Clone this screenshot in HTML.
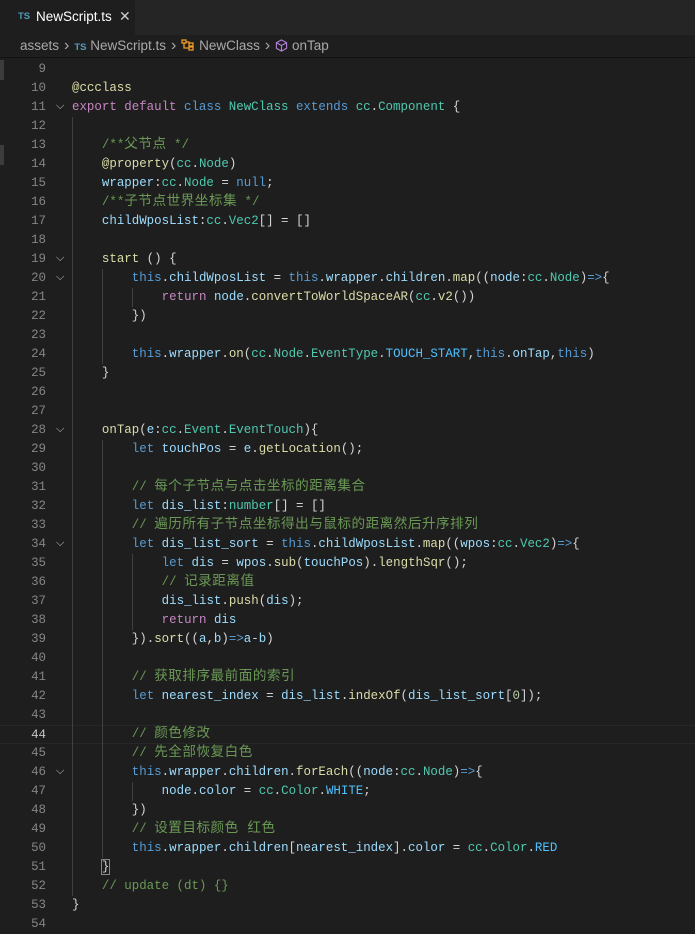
<!DOCTYPE html>
<html><head><meta charset="utf-8"><style>
*{margin:0;padding:0;box-sizing:border-box}
body{width:695px;height:924px;background:#1e1e1e;overflow:hidden;font-family:"Liberation Sans","Noto Sans CJK SC",sans-serif;position:relative}
.tabs{position:absolute;left:0;top:0;width:695px;height:35px;background:#252526}
.tab{position:absolute;left:0;top:0;width:135px;height:35px;background:#1e1e1e;color:#fff;font-size:13.5px}
.tab .ts{position:absolute;left:18px;top:11px;font-size:9.5px;font-weight:bold;color:#519aba}
.tab .nm{position:absolute;left:36px;top:9px}
.tab .x{position:absolute;left:119px;top:8px;font-size:14px;color:#ccc}
.bc{position:absolute;left:0;top:35px;height:22px;width:695px;color:#a9a9a9;font-size:13.5px;line-height:22px;padding-left:20px;white-space:nowrap}
.bc .ts{font-size:9.5px;font-weight:bold;color:#519aba}
.bc .sep{color:#a9a9a9;margin:0 5px;font-size:16px}
.ed{position:absolute;left:0;top:60px;width:695px}
.ln{position:relative;height:19px;line-height:19px;font-family:"Liberation Mono","Noto Sans CJK SC",monospace;font-size:12.45px;color:#d4d4d4;white-space:pre}
.num{position:absolute;left:0;width:46px;text-align:right;color:#858585}
.fold{position:absolute;left:56px;top:0;color:#c5c5c5;font-size:11px}
.code{position:absolute;left:72px;top:0}
.g{display:inline-block;width:29.9px;height:19px;vertical-align:top;border-left:1px solid #404040}
.cur{border-top:1px solid #282828;border-bottom:1px solid #282828;}
.k{color:#569cd6}.p{color:#c586c0}.t{color:#4ec9b0}.f{color:#dcdcaa}.v{color:#9cdcfe}.c{color:#6a9955}.n{color:#b5cea8}.co{color:#4fc1ff}
.z{font-size:13.6px;letter-spacing:.5px}
</style></head><body>
<div class="tabs"><div class="tab"><span class="ts">TS</span><span class="nm">NewScript.ts</span><span class="x">✕</span></div></div>
<div class="bc">assets<span class="sep">›</span><span class="ts">TS</span> NewScript.ts<span class="sep">›</span><svg width="14" height="12" viewBox="0 0 14 12" style="vertical-align:-1px"><g fill="none" stroke="#ee9d28" stroke-width="1.3"><rect x="1" y="1" width="4" height="3"/><rect x="8" y="4" width="4" height="3"/><rect x="8" y="8" width="4" height="3"/><path d="M3 4v5h5M5 3h3v2"/></g></svg> NewClass<span class="sep">›</span><svg width="13" height="13" viewBox="0 0 14 14" style="vertical-align:-2px"><g fill="none" stroke="#b180d7" stroke-width="1.2"><path d="M7 1l5.5 3v6L7 13 1.5 10V4z"/><path d="M1.5 4L7 7l5.5-3M7 7v6"/></g></svg> onTap</div>
<div style="position:absolute;left:0;top:57px;width:695px;height:1px;background:#000;opacity:.4"></div>
<div style="position:absolute;left:0;top:60px;width:4px;height:20px;background:#3c3c3c"></div>
<div style="position:absolute;left:0;top:145px;width:4px;height:20px;background:#3c3c3c"></div>
<div class="ed">
<div class="ln"><span class="num">9</span><span class="code"></span></div>
<div class="ln"><span class="num">10</span><span class="code"><span class="f">@ccclass</span></span></div>
<div class="ln"><span class="num">11</span><span class="fold">⌵</span><span class="code"><span class="p">export</span> <span class="p">default</span> <span class="k">class</span> <span class="t">NewClass</span> <span class="k">extends</span> <span class="t">cc</span>.<span class="t">Component</span> {</span></div>
<div class="ln"><span class="num">12</span><span class="code"><span class="g"></span></span></div>
<div class="ln"><span class="num">13</span><span class="code"><span class="g"></span><span class="c">/**<span class="z">父节点</span> */</span></span></div>
<div class="ln"><span class="num">14</span><span class="code"><span class="g"></span><span class="f">@property</span>(<span class="t">cc</span>.<span class="t">Node</span>)</span></div>
<div class="ln"><span class="num">15</span><span class="code"><span class="g"></span><span class="v">wrapper</span>:<span class="t">cc</span>.<span class="t">Node</span> = <span class="k">null</span>;</span></div>
<div class="ln"><span class="num">16</span><span class="code"><span class="g"></span><span class="c">/**<span class="z">子节点世界坐标集</span> */</span></span></div>
<div class="ln"><span class="num">17</span><span class="code"><span class="g"></span><span class="v">childWposList</span>:<span class="t">cc</span>.<span class="t">Vec2</span>[] = []</span></div>
<div class="ln"><span class="num">18</span><span class="code"><span class="g"></span></span></div>
<div class="ln"><span class="num">19</span><span class="fold">⌵</span><span class="code"><span class="g"></span><span class="f">start</span> () {</span></div>
<div class="ln"><span class="num">20</span><span class="fold">⌵</span><span class="code"><span class="g"></span><span class="g"></span><span class="k">this</span>.<span class="v">childWposList</span> = <span class="k">this</span>.<span class="v">wrapper</span>.<span class="v">children</span>.<span class="f">map</span>((<span class="v">node</span>:<span class="t">cc</span>.<span class="t">Node</span>)<span class="k">=&gt;</span>{</span></div>
<div class="ln"><span class="num">21</span><span class="code"><span class="g"></span><span class="g"></span><span class="g"></span><span class="p">return</span> <span class="v">node</span>.<span class="f">convertToWorldSpaceAR</span>(<span class="t">cc</span>.<span class="f">v2</span>())</span></div>
<div class="ln"><span class="num">22</span><span class="code"><span class="g"></span><span class="g"></span>})</span></div>
<div class="ln"><span class="num">23</span><span class="code"><span class="g"></span><span class="g"></span></span></div>
<div class="ln"><span class="num">24</span><span class="code"><span class="g"></span><span class="g"></span><span class="k">this</span>.<span class="v">wrapper</span>.<span class="f">on</span>(<span class="t">cc</span>.<span class="t">Node</span>.<span class="t">EventType</span>.<span class="co">TOUCH_START</span>,<span class="k">this</span>.<span class="v">onTap</span>,<span class="k">this</span>)</span></div>
<div class="ln"><span class="num">25</span><span class="code"><span class="g"></span>}</span></div>
<div class="ln"><span class="num">26</span><span class="code"><span class="g"></span></span></div>
<div class="ln"><span class="num">27</span><span class="code"><span class="g"></span></span></div>
<div class="ln"><span class="num">28</span><span class="fold">⌵</span><span class="code"><span class="g"></span><span class="f">onTap</span>(<span class="v">e</span>:<span class="t">cc</span>.<span class="t">Event</span>.<span class="t">EventTouch</span>){</span></div>
<div class="ln"><span class="num">29</span><span class="code"><span class="g"></span><span class="g"></span><span class="k">let</span> <span class="v">touchPos</span> = <span class="v">e</span>.<span class="f">getLocation</span>();</span></div>
<div class="ln"><span class="num">30</span><span class="code"><span class="g"></span><span class="g"></span></span></div>
<div class="ln"><span class="num">31</span><span class="code"><span class="g"></span><span class="g"></span><span class="c">// <span class="z">每个子节点与点击坐标的距离集合</span></span></span></div>
<div class="ln"><span class="num">32</span><span class="code"><span class="g"></span><span class="g"></span><span class="k">let</span> <span class="v">dis_list</span>:<span class="t">number</span>[] = []</span></div>
<div class="ln"><span class="num">33</span><span class="code"><span class="g"></span><span class="g"></span><span class="c">// <span class="z">遍历所有子节点坐标得出与鼠标的距离然后升序排列</span></span></span></div>
<div class="ln"><span class="num">34</span><span class="fold">⌵</span><span class="code"><span class="g"></span><span class="g"></span><span class="k">let</span> <span class="v">dis_list_sort</span> = <span class="k">this</span>.<span class="v">childWposList</span>.<span class="f">map</span>((<span class="v">wpos</span>:<span class="t">cc</span>.<span class="t">Vec2</span>)<span class="k">=&gt;</span>{</span></div>
<div class="ln"><span class="num">35</span><span class="code"><span class="g"></span><span class="g"></span><span class="g"></span><span class="k">let</span> <span class="v">dis</span> = <span class="v">wpos</span>.<span class="f">sub</span>(<span class="v">touchPos</span>).<span class="f">lengthSqr</span>();</span></div>
<div class="ln"><span class="num">36</span><span class="code"><span class="g"></span><span class="g"></span><span class="g"></span><span class="c">// <span class="z">记录距离值</span></span></span></div>
<div class="ln"><span class="num">37</span><span class="code"><span class="g"></span><span class="g"></span><span class="g"></span><span class="v">dis_list</span>.<span class="f">push</span>(<span class="v">dis</span>);</span></div>
<div class="ln"><span class="num">38</span><span class="code"><span class="g"></span><span class="g"></span><span class="g"></span><span class="p">return</span> <span class="v">dis</span></span></div>
<div class="ln"><span class="num">39</span><span class="code"><span class="g"></span><span class="g"></span>}).<span class="f">sort</span>((<span class="v">a</span>,<span class="v">b</span>)<span class="k">=&gt;</span><span class="v">a</span>-<span class="v">b</span>)</span></div>
<div class="ln"><span class="num">40</span><span class="code"><span class="g"></span><span class="g"></span></span></div>
<div class="ln"><span class="num">41</span><span class="code"><span class="g"></span><span class="g"></span><span class="c">// <span class="z">获取排序最前面的索引</span></span></span></div>
<div class="ln"><span class="num">42</span><span class="code"><span class="g"></span><span class="g"></span><span class="k">let</span> <span class="v">nearest_index</span> = <span class="v">dis_list</span>.<span class="f">indexOf</span>(<span class="v">dis_list_sort</span>[<span class="n">0</span>]);</span></div>
<div class="ln"><span class="num">43</span><span class="code"><span class="g"></span><span class="g"></span></span></div>
<div class="ln cur"><span class="num" style="color:#c6c6c6">44</span><span class="code" style="top:-1px"><span class="g"></span><span class="g"></span><span class="c">// <span class="z">颜色修改</span></span></span></div>
<div class="ln"><span class="num">45</span><span class="code"><span class="g"></span><span class="g"></span><span class="c">// <span class="z">先全部恢复白色</span></span></span></div>
<div class="ln"><span class="num">46</span><span class="fold">⌵</span><span class="code"><span class="g"></span><span class="g"></span><span class="k">this</span>.<span class="v">wrapper</span>.<span class="v">children</span>.<span class="f">forEach</span>((<span class="v">node</span>:<span class="t">cc</span>.<span class="t">Node</span>)<span class="k">=&gt;</span>{</span></div>
<div class="ln"><span class="num">47</span><span class="code"><span class="g"></span><span class="g"></span><span class="g"></span><span class="v">node</span>.<span class="v">color</span> = <span class="t">cc</span>.<span class="t">Color</span>.<span class="co">WHITE</span>;</span></div>
<div class="ln"><span class="num">48</span><span class="code"><span class="g"></span><span class="g"></span>})</span></div>
<div class="ln"><span class="num">49</span><span class="code"><span class="g"></span><span class="g"></span><span class="c">// <span class="z">设置目标颜色 红色</span></span></span></div>
<div class="ln"><span class="num">50</span><span class="code"><span class="g"></span><span class="g"></span><span class="k">this</span>.<span class="v">wrapper</span>.<span class="v">children</span>[<span class="v">nearest_index</span>].<span class="v">color</span> = <span class="t">cc</span>.<span class="t">Color</span>.<span class="co">RED</span></span></div>
<div class="ln"><span class="num">51</span><span class="code"><span class="g"></span><span style="outline:1px solid #888">}</span></span></div>
<div class="ln"><span class="num">52</span><span class="code"><span class="g"></span><span class="c">// update (dt) {}</span></span></div>
<div class="ln"><span class="num">53</span><span class="code">}</span></div>
<div class="ln"><span class="num">54</span><span class="code"></span></div>
</div>
</body></html>
